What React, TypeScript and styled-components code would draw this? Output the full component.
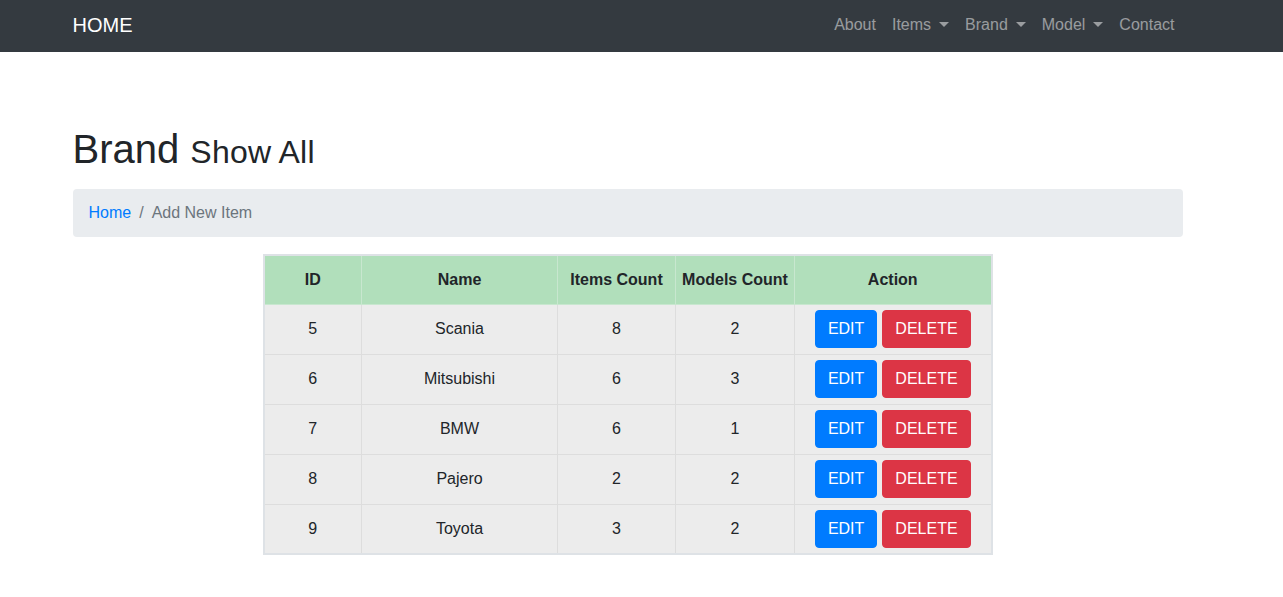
import React from "react";
import styled, { createGlobalStyle } from "styled-components";

const Global = createGlobalStyle`
  html, body { margin: 0; padding: 0; background: #fff; }
  body {
    font-family: "Liberation Sans", Arial, sans-serif;
    font-size: 16px;
    line-height: 1.5;
    color: #212529;
  }
  * { box-sizing: border-box; }
`;

const NavBar = styled.nav`
  background: #343a40;
  height: 52px;
`;

const NavInner = styled.div`
  width: 1110px;
  margin: 0 auto;
  display: flex;
  align-items: center;
  justify-content: space-between;
  height: 100%;
  padding-bottom: 2px;
  position: relative;
  left: -14px;
`;

const Brand = styled.a`
  color: #fff;
  font-size: 20px;
  line-height: 30px;
  text-decoration: none;
`;

const NavList = styled.ul`
  list-style: none;
  margin: 0;
  padding: 0;
  display: flex;
`;

const NavLink = styled.a`
  display: flex;
  align-items: center;
  color: rgba(255, 255, 255, 0.5);
  padding: 8px 8px;
  text-decoration: none;
  line-height: 24px;
`;

const Caret = styled.span`
  display: inline-block;
  margin-left: 8px;
  width: 0;
  height: 0;
  border-top: 5px solid rgba(255, 255, 255, 0.5);
  border-left: 5px solid transparent;
  border-right: 5px solid transparent;
  position: relative;
  top: -1px;
`;

const Container = styled.main`
  width: 1110px;
  margin: 0 auto;
  padding-top: 73px;
  position: relative;
  left: -14px;
`;

const Title = styled.h1`
  margin: 0 0 13px;
  font-size: 40px;
  font-weight: 500;
  line-height: 48px;
`;

const Small = styled.small`
  font-size: 32px;
  font-weight: 400;
  letter-spacing: 0.2px;
`;

const Crumbs = styled.ol`
  list-style: none;
  margin: 0 0 17px;
  padding: 12px 16px;
  background: #e9ecef;
  border-radius: 4px;
  display: flex;
  line-height: 24px;
`;

const Crumb = styled.li<{ $active?: boolean }>`
  color: ${(p) => (p.$active ? "#6c757d" : "#007bff")};
`;

const Sep = styled.li`
  color: #6c757d;
  padding: 0 8px;
`;

const Table = styled.table`
  margin: 0 auto;
  border-collapse: collapse;
  border: 2px solid #dee2e6;
  table-layout: fixed;
`;

const Th = styled.th<{ $w: number }>`
  width: ${(p) => p.$w}px;
  height: 49px;
  background: #b1dfbb;
  border: 1px solid #c8e7cf;
  font-weight: 700;
  text-align: center;
  vertical-align: middle;
  padding: 0 6px;
`;

const Td = styled.td`
  height: 50px;
  background: #ececec;
  border: 1px solid #dddddd;
  text-align: center;
  vertical-align: middle;
  padding: 0;
`;

const Actions = styled.div`
  display: flex;
  justify-content: center;
  gap: 5px;
`;

const Btn = styled.button<{ $variant: "edit" | "delete" }>`
  font-family: "Liberation Sans", Arial, sans-serif;
  font-size: 16px;
  line-height: 24px;
  padding: 6px 12px;
  border: 1px solid ${(p) => (p.$variant === "edit" ? "#007bff" : "#dc3545")};
  background: ${(p) => (p.$variant === "edit" ? "#007bff" : "#dc3545")};
  color: #fff;
  border-radius: 4px;
  cursor: pointer;
`;

const rows = [
  { id: 5, name: "Scania", items: 8, models: 2 },
  { id: 6, name: "Mitsubishi", items: 6, models: 3 },
  { id: 7, name: "BMW", items: 6, models: 1 },
  { id: 8, name: "Pajero", items: 2, models: 2 },
  { id: 9, name: "Toyota", items: 3, models: 2 },
];

export default function App() {
  return (
    <>
      <Global />
      <NavBar>
        <NavInner>
          <Brand href="#">HOME</Brand>
          <NavList>
            <li><NavLink href="#">About</NavLink></li>
            <li><NavLink href="#">Items<Caret /></NavLink></li>
            <li><NavLink href="#">Brand<Caret /></NavLink></li>
            <li><NavLink href="#">Model<Caret /></NavLink></li>
            <li><NavLink href="#">Contact</NavLink></li>
          </NavList>
        </NavInner>
      </NavBar>
      <Container>
        <Title>
          Brand <Small>Show All</Small>
        </Title>
        <Crumbs>
          <Crumb>Home</Crumb>
          <Sep aria-hidden>/</Sep>
          <Crumb $active>Add New Item</Crumb>
        </Crumbs>
        <Table>
          <thead>
            <tr>
              <Th $w={98}>ID</Th>
              <Th $w={196}>Name</Th>
              <Th $w={118}>Items Count</Th>
              <Th $w={119}>Models Count</Th>
              <Th $w={197}>Action</Th>
            </tr>
          </thead>
          <tbody>
            {rows.map((r) => (
              <tr key={r.id}>
                <Td>{r.id}</Td>
                <Td>{r.name}</Td>
                <Td>{r.items}</Td>
                <Td>{r.models}</Td>
                <Td>
                  <Actions>
                    <Btn $variant="edit">EDIT</Btn>
                    <Btn $variant="delete">DELETE</Btn>
                  </Actions>
                </Td>
              </tr>
            ))}
          </tbody>
        </Table>
      </Container>
    </>
  );
}
